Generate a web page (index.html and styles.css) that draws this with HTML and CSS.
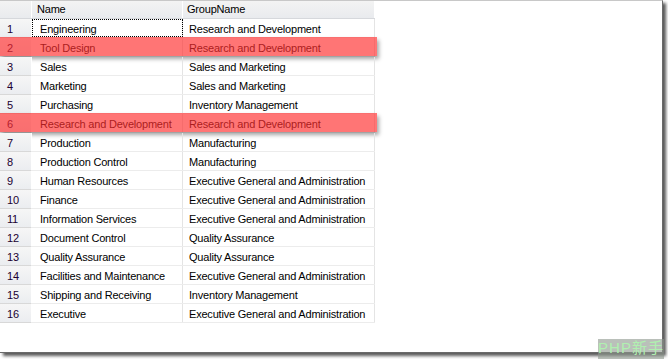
FILE: index.html
```html
<!DOCTYPE html>
<html>
<head>
<meta charset="utf-8">
<link rel="stylesheet" href="styles.css">
</head>
<body>
<div class="frame">
  <div class="grid">
    <div class="row head">
      <div class="num"></div>
      <div class="c name">Name</div>
      <div class="c group">GroupName</div>
    </div>
    <div class="row"><div class="num">1</div><div class="c name focus">Engineering</div><div class="c group">Research and Development</div></div>
    <div class="row hl"><div class="num">2</div><div class="c name">Tool Design</div><div class="c group">Research and Development</div></div>
    <div class="row"><div class="num">3</div><div class="c name">Sales</div><div class="c group">Sales and Marketing</div></div>
    <div class="row"><div class="num">4</div><div class="c name">Marketing</div><div class="c group">Sales and Marketing</div></div>
    <div class="row"><div class="num">5</div><div class="c name">Purchasing</div><div class="c group">Inventory Management</div></div>
    <div class="row hl"><div class="num">6</div><div class="c name">Research and Development</div><div class="c group">Research and Development</div></div>
    <div class="row"><div class="num">7</div><div class="c name">Production</div><div class="c group">Manufacturing</div></div>
    <div class="row"><div class="num">8</div><div class="c name">Production Control</div><div class="c group">Manufacturing</div></div>
    <div class="row"><div class="num">9</div><div class="c name">Human Resources</div><div class="c group">Executive General and Administration</div></div>
    <div class="row"><div class="num">10</div><div class="c name">Finance</div><div class="c group">Executive General and Administration</div></div>
    <div class="row"><div class="num">11</div><div class="c name">Information Services</div><div class="c group">Executive General and Administration</div></div>
    <div class="row"><div class="num">12</div><div class="c name">Document Control</div><div class="c group">Quality Assurance</div></div>
    <div class="row"><div class="num">13</div><div class="c name">Quality Assurance</div><div class="c group">Quality Assurance</div></div>
    <div class="row"><div class="num">14</div><div class="c name">Facilities and Maintenance</div><div class="c group">Executive General and Administration</div></div>
    <div class="row"><div class="num">15</div><div class="c name">Shipping and Receiving</div><div class="c group">Inventory Management</div></div>
    <div class="row"><div class="num">16</div><div class="c name">Executive</div><div class="c group">Executive General and Administration</div></div>
  </div>
</div>
<div class="watermark">PHP新手</div>
</body>
</html>
```
FILE: styles.css
```css
html, body {
  margin: 0;
  padding: 0;
  background: #ffffff;
}
body {
  position: relative;
  width: 668px;
  height: 359px;
  overflow: hidden;
}
.frame {
  width: 662px;
  height: 351px;
  background: #ffffff;
  border-top: 1px solid #c8c8c8;
  border-right: 1px solid #6a6a6a;
  border-bottom: 1px solid #6a6a6a;
  box-shadow: 3px 3px 3px rgba(0, 0, 0, 0.65);
  font-family: "Liberation Sans", Arial, sans-serif;
  font-size: 11px;
  letter-spacing: -0.2px;
  color: #000000;
}
.grid {
  display: flex;
  flex-direction: column;
  width: 375px;
}
.row {
  position: relative;
  display: flex;
  height: 19px;
  border-bottom: 1px solid #ececec;
  box-sizing: border-box;
}
.row.head {
  height: 18px;
  background: linear-gradient(#f3f3f3, #e9ebee);
  border-bottom: 1px solid #d6d8dc;
}
.num {
  width: 32px;
  flex: none;
  box-sizing: border-box;
  padding-left: 7px;
  padding-top: 1px;
  line-height: 18px;
  color: #200030;
  background: linear-gradient(#f6f6f6, #ebedf0);
  border-right: 1px solid #ffffff;
  border-bottom: 1px solid #d8d8d8;
  margin-bottom: -1px;
}
.head .num {
  background: transparent;
  border-bottom: none;
  margin-bottom: 0;
  padding-top: 0;
}
.c {
  box-sizing: border-box;
  padding-top: 1px;
  line-height: 18px;
  white-space: nowrap;
  overflow: hidden;
}
.name {
  width: 151px;
  padding-left: 8px;
  border-right: 1px solid #e4e4e4;
}
.group {
  width: 192px;
  padding-left: 6px;
  border-right: 1px solid #e4e4e4;
}
.head .c {
  padding-top: 0;
  padding-left: 5px;
  line-height: 17px;
  border-right: 1px solid #ffffff;
}
.head .group {
  padding-left: 4px;
}
.focus {
  outline: 1px dotted #000000;
  outline-offset: -1px;
}
.row.hl::after {
  content: "";
  position: absolute;
  left: 0;
  top: -1px;
  width: 377px;
  height: 19px;
  background: rgba(255, 45, 45, 0.66);
  box-shadow: 2px 3px 4px rgba(0, 0, 0, 0.35);
}
.watermark {
  position: absolute;
  left: 598px;
  top: 339px;
  width: 66px;
  height: 20px;
  box-sizing: border-box;
  padding-bottom: 2px;
  display: flex;
  align-items: center;
  justify-content: center;
  font-family: "Liberation Sans", "Noto Sans CJK SC", sans-serif;
  font-size: 15px;
  line-height: 16px;
  letter-spacing: 1px;
  color: #b0f0b0;
  background: rgba(140, 150, 140, 0.6);
}
```
